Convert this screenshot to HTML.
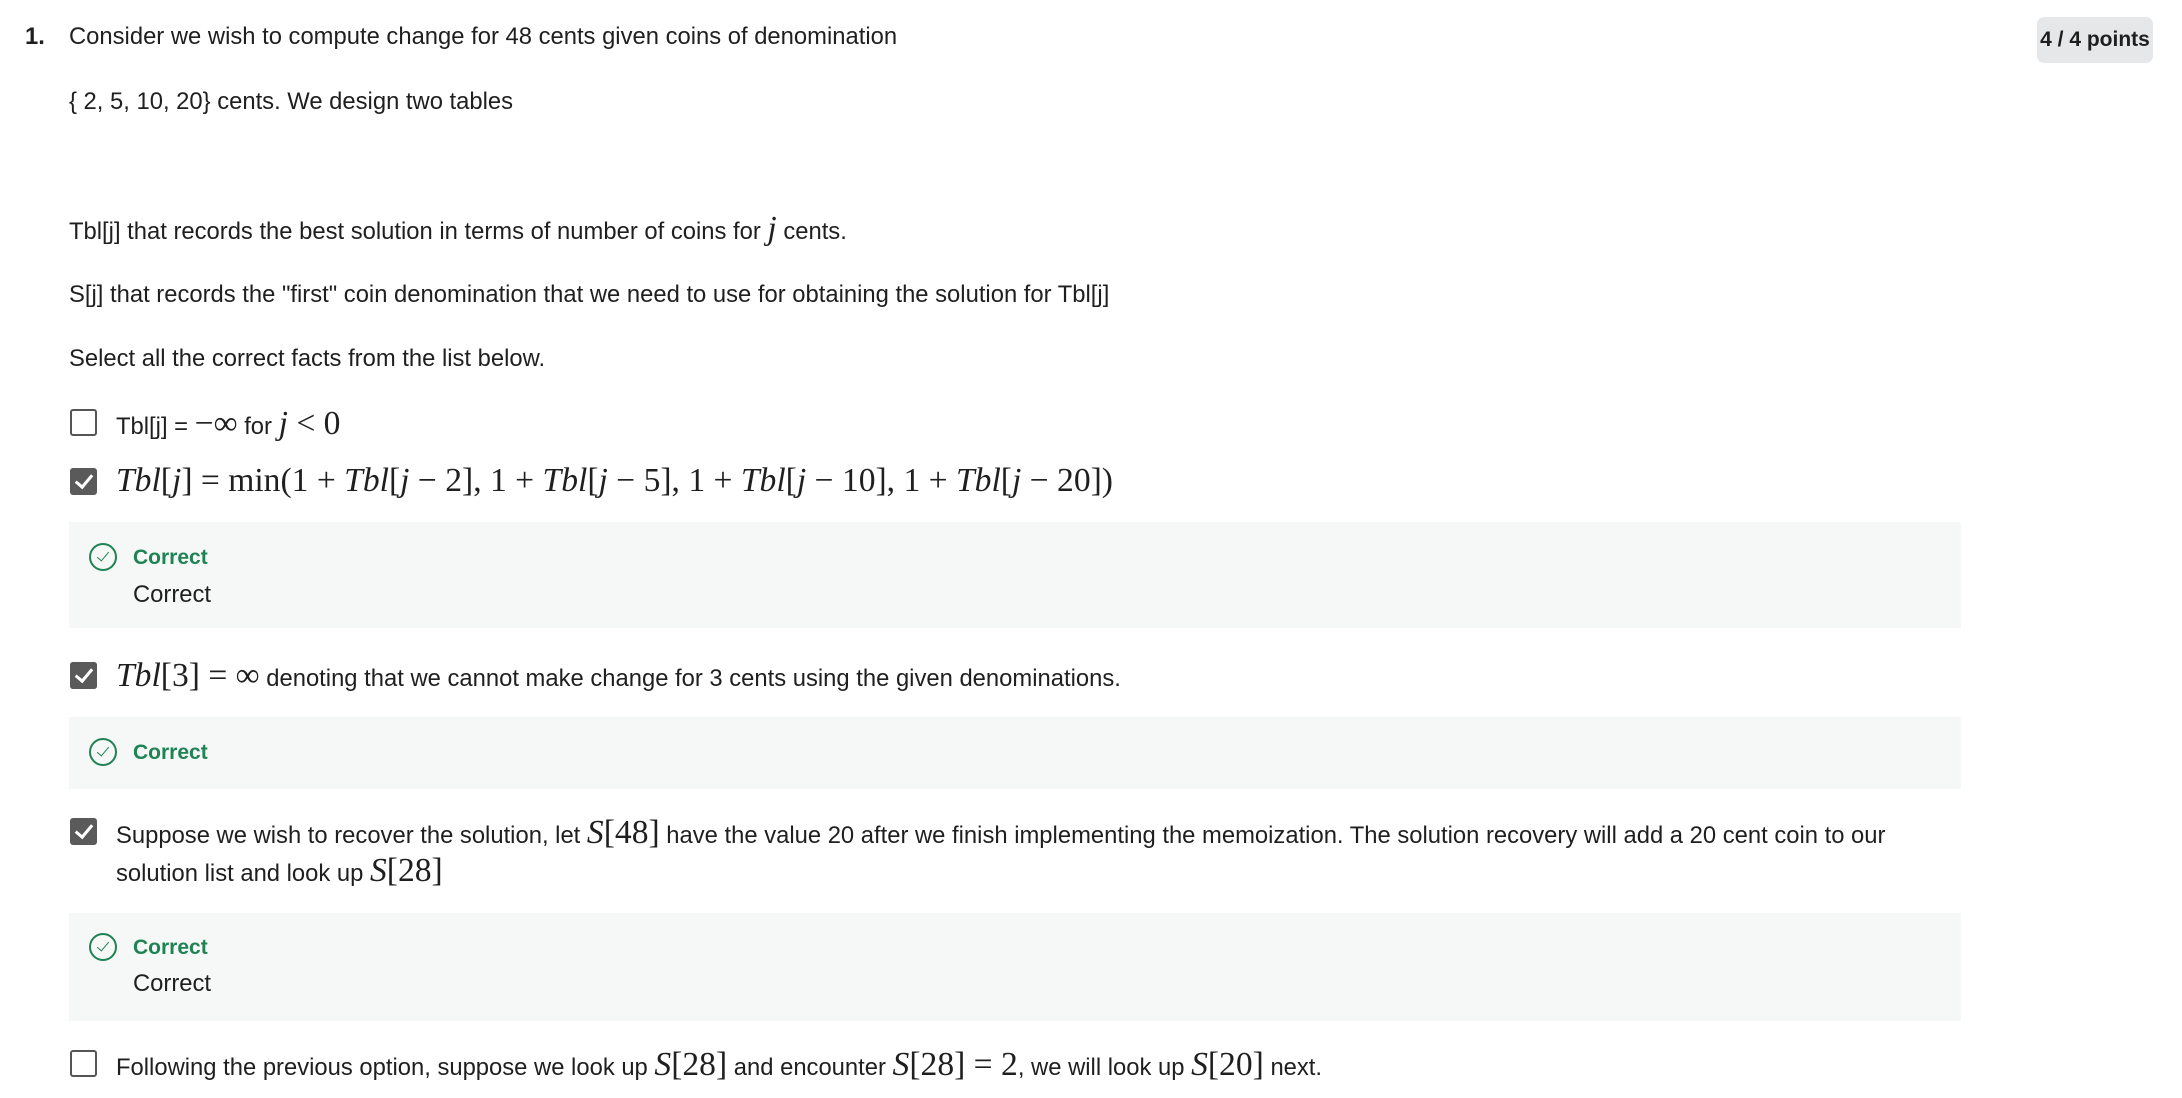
<!DOCTYPE html>
<html><head><meta charset="utf-8"><style>
body{margin:0;width:2182px;height:1098px;background:#fff;position:relative;overflow:hidden;font-family:"Liberation Sans",sans-serif;color:#1f1f1f;font-size:23.8px;}
.a{position:absolute;white-space:nowrap;line-height:30px;}
.m{font-family:"Liberation Serif",serif;font-size:33.6px;}
.i{font-style:italic;}
.cb{position:absolute;left:70px;width:23px;height:23px;border:2.5px solid #555;border-radius:3px;background:#fff;}
.cb.on{background:#5a5a5a;border-color:#5a5a5a;}
.cb.on::after{content:"";position:absolute;left:7px;top:1px;width:7px;height:14px;border:solid #fff;border-width:0 3px 3px 0;transform:rotate(40deg);}
.box{position:absolute;left:69px;width:1892px;background:#f5f8f7;}
.ic{position:absolute;width:28px;height:28px;border:2px solid #1f8354;border-radius:50%;box-sizing:border-box;}
.ic::after{content:"";position:absolute;left:9px;top:4px;width:5px;height:11px;border:solid #1f8354;border-width:0 1.6px 1.6px 0;transform:rotate(40deg);}
.g{color:#1f8354;font-weight:bold;font-size:21px;}
</style></head><body>
<div class="a" style="left:25px;top:22px;font-weight:bold;">1.</div>
<div class="a" style="left:69px;top:22px;">Consider we wish to compute change for 48 cents given coins of denomination</div>
<div class="a" style="left:2037px;top:17px;width:116px;height:46px;background:#e5e7e8;border-radius:7px;font-weight:bold;font-size:21px;line-height:46px;text-align:center;">4 / 4 points</div>
<div class="a" style="left:69px;top:87px;">{ 2, 5, 10, 20} cents. We design two tables</div>
<div class="a" style="left:69px;top:214px;">Tbl[j] that records the best solution in terms of number of coins for <span class="m i">j</span> cents.</div>
<div class="a" style="left:69px;top:280px;">S[j] that records the "first" coin denomination that we need to use for obtaining the solution for Tbl[j]</div>
<div class="a" style="left:69px;top:344px;">Select all the correct facts from the list below.</div>

<div class="cb" style="top:409px;"></div>
<div class="a" style="left:116px;top:409px;">Tbl[j] = <span class="m">−∞</span> for <span class="m"><i>j</i> &lt; 0</span></div>

<div class="cb on" style="top:468px;"></div>
<div class="a m" style="left:116px;top:466px;"><i>Tbl</i>[<i>j</i>] = min(1 + <i>Tbl</i>[<i>j</i> − 2], 1 + <i>Tbl</i>[<i>j</i> − 5], 1 + <i>Tbl</i>[<i>j</i> − 10], 1 + <i>Tbl</i>[<i>j</i> − 20])</div>

<div class="box" style="top:522px;height:106px;"></div>
<div class="ic" style="left:89px;top:543px;"></div>
<div class="a g" style="left:133px;top:543px;">Correct</div>
<div class="a" style="left:133px;top:580px;">Correct</div>

<div class="cb" style="top:662px;" class="cb on"></div>
<div class="cb on" style="top:662px;"></div>
<div class="a" style="left:116px;top:661px;"><span class="m"><i>Tbl</i>[3] = ∞</span> denoting that we cannot make change for 3 cents using the given denominations.</div>

<div class="box" style="top:717px;height:72px;"></div>
<div class="ic" style="left:89px;top:738px;"></div>
<div class="a g" style="left:133px;top:738px;">Correct</div>

<div class="cb on" style="top:818px;"></div>
<div class="a" style="left:116px;top:818px;">Suppose we wish to recover the solution, let <span class="m"><i>S</i>[48]</span> have the value 20 after we finish implementing the memoization. The solution recovery will add a 20 cent coin to our</div>
<div class="a" style="left:116px;top:856px;">solution list and look up <span class="m"><i>S</i>[28]</span></div>

<div class="box" style="top:913px;height:108px;"></div>
<div class="ic" style="left:89px;top:933px;"></div>
<div class="a g" style="left:133px;top:933px;">Correct</div>
<div class="a" style="left:133px;top:969px;">Correct</div>

<div class="cb" style="top:1050px;"></div>
<div class="a" style="left:116px;top:1050px;">Following the previous option, suppose we look up <span class="m"><i>S</i>[28]</span> and encounter <span class="m"><i>S</i>[28] = 2</span>, we will look up <span class="m"><i>S</i>[20]</span> next.</div>
</body></html>
